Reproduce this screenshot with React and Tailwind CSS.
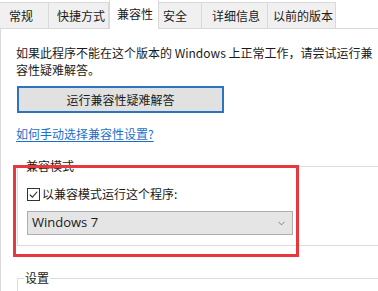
import { ChevronDown } from 'lucide-react';

const font = { fontFamily: '"Noto Sans CJK SC", "Noto Sans", sans-serif' };

// 属性对话框的标签页：宽度和文字左距按截图量出来
const tabs = [
  { label: '常规', w: 'w-[49px]', pl: 'pl-[9px]' },
  { label: '快捷方式', w: 'w-[60px]', pl: 'pl-[8px]' },
  { label: '兼容性', w: 'w-[50px]', pl: 'pl-[7px]', active: true },
  { label: '安全', w: 'w-[43px]', pl: 'pl-[4px]' },
  { label: '详细信息', w: 'w-[66px]', pl: 'pl-[10px]' },
  { label: '以前的版本', w: 'w-[68px]', pl: 'pl-[5px]' },
];

export default function App() {
  return (
    <div
      className="relative h-[291px] w-[378px] overflow-hidden bg-white text-[12px] text-[#1a1a1a]"
      style={font}
    >
      <TabStrip />

      <div className="h-[262px] border-l border-[#d9d9d9] pl-[15px]">
        <p className="whitespace-nowrap pt-[15px] leading-[17px]">
          如果此程序不能在这个版本的 Windows 上正常工作，请尝试运行兼
          <br />
          容性疑难解答。
        </p>

        <button
          type="button"
          className="ml-px mt-[8px] flex h-[27px] w-[207px] items-center justify-center border-2 border-[#2a74c0] bg-[#e1e1e1] text-[12px]"
        >
          运行兼容性疑难解答
        </button>

        <a href="#" className="mt-[13px] block w-fit leading-[16px] text-[#1a6fc9] underline underline-offset-2">
          如何手动选择兼容性设置?
        </a>

        <fieldset className="ml-px mt-[17px] h-[87px] border-y border-l border-[#dcdcdc] pl-[9px]">
          <legend className="-ml-[2px] px-px leading-[14px]">兼容模式</legend>
          <label className="mt-[14px] flex items-center gap-[2px] leading-[14px]">
            <span className="grid h-[13px] w-[13px] place-items-center border border-[#333]">
              <svg viewBox="0 0 12 12" className="h-[11px] w-[11px]" fill="none" stroke="#222" strokeWidth="1.2">
                <path d="M2 6.2 L4.8 9 L10 3" />
              </svg>
            </span>
            以兼容模式运行这个程序:
          </label>
          <div className="mt-[10px] flex h-[24px] w-[266px] items-center justify-between border border-[#adadad] bg-[#e5e5e5] pl-[4px] pr-[5px]">
            <span className="text-[13px]" style={{ fontFamily: '"Open Sans", "Noto Sans", sans-serif' }}>
              Windows 7
            </span>
            <ChevronDown size={11} strokeWidth={1.3} className="text-[#444]" />
          </div>
        </fieldset>

        <fieldset className="ml-px mt-[25px] h-[40px] border-l border-t border-[#dcdcdc] pl-[6px]">
          <legend className="px-px leading-[14px]">设置</legend>
        </fieldset>
      </div>

      {/* 截图上画的红色标注框 */}
      <div className="pointer-events-none absolute left-[13px] top-[165px] h-[92px] w-[286px] border-[3px] border-[#e8383f]" />
    </div>
  );
}

function TabStrip() {
  return (
    <div className="flex h-[29px] items-end border-b border-[#d9d9d9]">
      {tabs.map((tab) =>
        tab.active ? (
          <div
            key={tab.label}
            className={`${tab.w} ${tab.pl} relative -mb-px h-[30px] border-x border-t border-[#d9d9d9] bg-white pt-[6px] leading-[16px]`}
          >
            {tab.label}
          </div>
        ) : (
          <div
            key={tab.label}
            className={`${tab.w} ${tab.pl} h-[26px] border-r border-t border-[#d9d9d9] bg-[#f0f0f0] pt-[5px] leading-[16px]`}
          >
            {tab.label}
          </div>
        )
      )}
    </div>
  );
}
